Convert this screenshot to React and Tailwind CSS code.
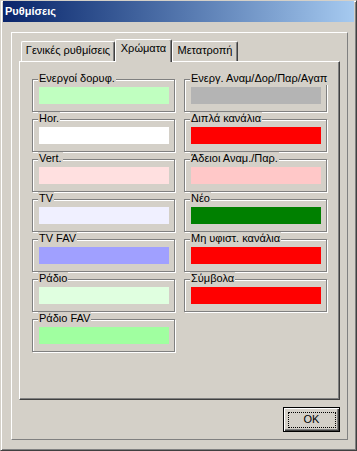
import React from "react";

const left = [
  { label: "Ενεργοί δορυφ.", color: "bg-[#c0ffc0]" },
  { label: "Hor.", color: "bg-[#ffffff]" },
  { label: "Vert.", color: "bg-[#ffe0e0]" },
  { label: "TV", color: "bg-[#f0f0ff]" },
  { label: "TV FAV", color: "bg-[#a0a0ff]" },
  { label: "Ράδιο", color: "bg-[#e0ffe0]" },
  { label: "Ράδιο FAV", color: "bg-[#a0ffa0]" },
];

const right = [
  { label: "Ενεργ. Αναμ/Δορ/Παρ/Αγαπ", color: "bg-[#b4b4b4]" },
  { label: "Διπλά κανάλια", color: "bg-[#ff0000]" },
  { label: "Άδειοι Αναμ./Παρ.", color: "bg-[#ffc8c8]" },
  { label: "Νέο", color: "bg-[#008000]" },
  { label: "Μη υφιστ. κανάλια", color: "bg-[#ff0000]" },
  { label: "Σύμβολα", color: "bg-[#ff0000]" },
];

function ColorBox({ label, color }) {
  return (
    <div className="relative h-[33px] w-[143px] border border-[#808080] shadow-[inset_1px_1px_0_#fff,1px_1px_0_#fff] pt-[7px] pl-[6px]">
      <span className="absolute left-[5px] top-[-8px] px-[1px] bg-[#d4d0c8] leading-[13px] whitespace-nowrap">
        {label}
      </span>
      <div className={`h-[17px] w-[130px] ${color}`} />
    </div>
  );
}

export default function App() {
  return (
    <div className="w-[357px] h-[451px] bg-[#d4d0c8] border border-t-[#d4d0c8] border-l-[#d4d0c8] border-r-[#404040] border-b-[#404040] shadow-[inset_1px_1px_0_#fff,inset_-1px_-1px_0_#808080] px-[2px] pb-[2px] flex flex-col font-['Liberation_Sans',Arial,sans-serif] text-[11px] text-black leading-[13px]">
      <div className="h-[21px] shrink-0 flex items-center pl-[2px] bg-gradient-to-r from-[#0a246a] to-[#a6caf0] text-white font-bold">
        Ρυθμίσεις
      </div>
      <div className="mt-[10px] ml-[8px] mr-[6px] mb-[8px] flex-1 border border-t-white border-l-white border-r-[#808080] border-b-[#808080] pt-[6px] px-[7px] flex flex-col">
        <div className="h-[22px] flex items-end pl-[2px]">
          <div className="w-[94px] h-[20px] border-l border-t border-l-white border-t-white border-r border-r-[#404040] shadow-[inset_-1px_0_0_#808080] rounded-tl-[2px] rounded-tr-[2px] pt-[2px] text-center">
            Γενικές ρυθμίσεις
          </div>
          <div className="relative z-10 top-[1px] w-[57px] h-[23px] bg-[#d4d0c8] border-l border-t border-l-white border-t-white border-r border-r-[#404040] shadow-[inset_-1px_0_0_#808080] rounded-tl-[2px] rounded-tr-[2px] pt-[2px] text-center">
            Χρώματα
          </div>
          <div className="w-[66px] h-[20px] border-l border-t border-l-white border-t-white border-r border-r-[#404040] shadow-[inset_-1px_0_0_#808080] rounded-tl-[2px] rounded-tr-[2px] pt-[2px] text-center">
            Μετατροπή
          </div>
        </div>
        <div className="h-[339px] border border-t-white border-l-white border-r-[#404040] border-b-[#404040] shadow-[inset_-1px_-1px_0_#808080] pt-[17px] pl-[12px] flex gap-[9px]">
          <div className="flex flex-col gap-[7px]">
            {left.map((it) => (
              <ColorBox key={it.label} {...it} />
            ))}
          </div>
          <div className="flex flex-col gap-[7px]">
            {right.map((it) => (
              <ColorBox key={it.label} {...it} />
            ))}
          </div>
        </div>
        <div className="mt-[7px] flex justify-end">
          <button className="relative w-[57px] h-[25px] bg-[#d4d0c8] border border-black shadow-[inset_1px_1px_0_#fff,inset_-1px_-1px_0_#404040,inset_-2px_-2px_0_#808080] flex items-center justify-center">
            <span className="absolute left-[4px] top-[4px] right-[3px] bottom-[3px] border border-dotted border-black" />
            OK
          </button>
        </div>
      </div>
    </div>
  );
}
